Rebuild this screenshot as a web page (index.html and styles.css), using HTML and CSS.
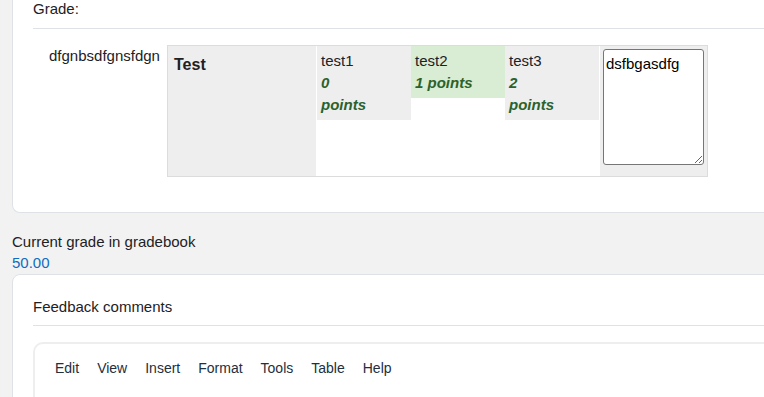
FILE: index.html
```html
<!DOCTYPE html>
<html lang="en">
<head>
    <meta charset="UTF-8">
    <meta name="viewport" content="width=device-width, initial-scale=1.0">
    <title>Grading</title>
    <link rel="stylesheet" href="styles.css">
</head>
<body>

<div class="card grade-card">
    <div class="card-label">Grade:</div>
    <div class="rubric">
        <div class="crit-name">dfgnbsdfgnsfdgn</div>
        <div class="crit-table">
            <div class="crit-desc">Test</div>
            <div class="levels">
                <div class="level">
                    <div>test1</div>
                    <div class="score">0<br>points</div>
                </div>
                <div class="level checked">
                    <div>test2</div>
                    <div class="score">1 points</div>
                </div>
                <div class="level">
                    <div>test3</div>
                    <div class="score">2<br>points</div>
                </div>
            </div>
            <div class="remark">
                <textarea class="remark-text">dsfbgasdfg</textarea>
            </div>
        </div>
    </div>
</div>

<div class="current-grade">
    <div>Current grade in gradebook</div>
    <div class="grade-value">50.00</div>
</div>

<div class="card feedback-card">
    <div class="card-label feedback-label">Feedback comments</div>
    <div class="editor">
        <!-- Меню редактора -->
        <div class="menubar">
            <span class="menu-item">Edit</span>
            <span class="menu-item">View</span>
            <span class="menu-item">Insert</span>
            <span class="menu-item">Format</span>
            <span class="menu-item">Tools</span>
            <span class="menu-item">Table</span>
            <span class="menu-item">Help</span>
        </div>
    </div>
</div>

</body>
</html>
```

FILE: styles.css
```css
body {
    font-family: "Liberation Sans", Arial, sans-serif;
    font-size: 15px;
    color: #1d2125;
    margin: 0;
    background-color: #f2f2f2;
    width: 800px;
    overflow: hidden;
}
.card {
    background-color: #fff;
    border: 1px solid #dee2e6;
    margin-left: 12px;
    padding: 0 20px;
}
.grade-card {
    border-top: none;
    border-radius: 0 0 8px 8px;
    padding-bottom: 35px;
}
.card-label {
    line-height: 18px;
    padding-bottom: 10px;
    border-bottom: 1px solid #dee2e6;
}
.rubric {
    display: flex;
    margin-top: 16px;
    padding-left: 16px;
}
.crit-name {
    width: 118px;
    padding-top: 2px;
    line-height: 18px;
}
.crit-table {
    display: flex;
    border: 1px solid #dcdcdc;
    background-color: #fff;
}
.crit-desc {
    width: 136px;
    padding: 10px 6px 8px;
    background-color: #eee;
    font-weight: bold;
    font-size: 16px;
    border-right: 1px solid #fff;
}
.levels {
    display: flex;
    align-items: flex-start;
    height: 130px;
}
.level {
    width: 86px;
    padding: 4px;
    line-height: 22px;
    background-color: #eee;
}
.level.checked {
    background-color: #d9ecd4;
}
.score {
    font-weight: bold;
    font-style: italic;
    color: #2b622b;
}
.remark {
    padding: 3px;
    background-color: #eee;
    border-left: 1px solid #fff;
}
.remark-text {
    display: block;
    width: 95px;
    height: 109px;
    padding: 3px 2px 2px;
    margin: 0;
    font-family: inherit;
    font-size: 15px;
    line-height: 22px;
    color: #000;
    border: 1px solid #767676;
    border-radius: 3px;
    resize: vertical;
}
.current-grade {
    padding: 18px 12px 1px;
    line-height: 21px;
}
.grade-value {
    color: #0f6cbf;
}
.feedback-card {
    border-radius: 8px 8px 0 0;
    height: 200px;
}
.feedback-label {
    line-height: 22px;
    padding-top: 21px;
    padding-bottom: 7px;
}
.editor {
    margin-top: 16px;
    border: 2px solid #eee;
    border-radius: 10px;
    height: 100px;
}
.menubar {
    display: flex;
    gap: 18px;
    padding: 14px 0 0 20px;
    line-height: 20px;
    font-size: 14px;
    color: #222f3e;
}
```
